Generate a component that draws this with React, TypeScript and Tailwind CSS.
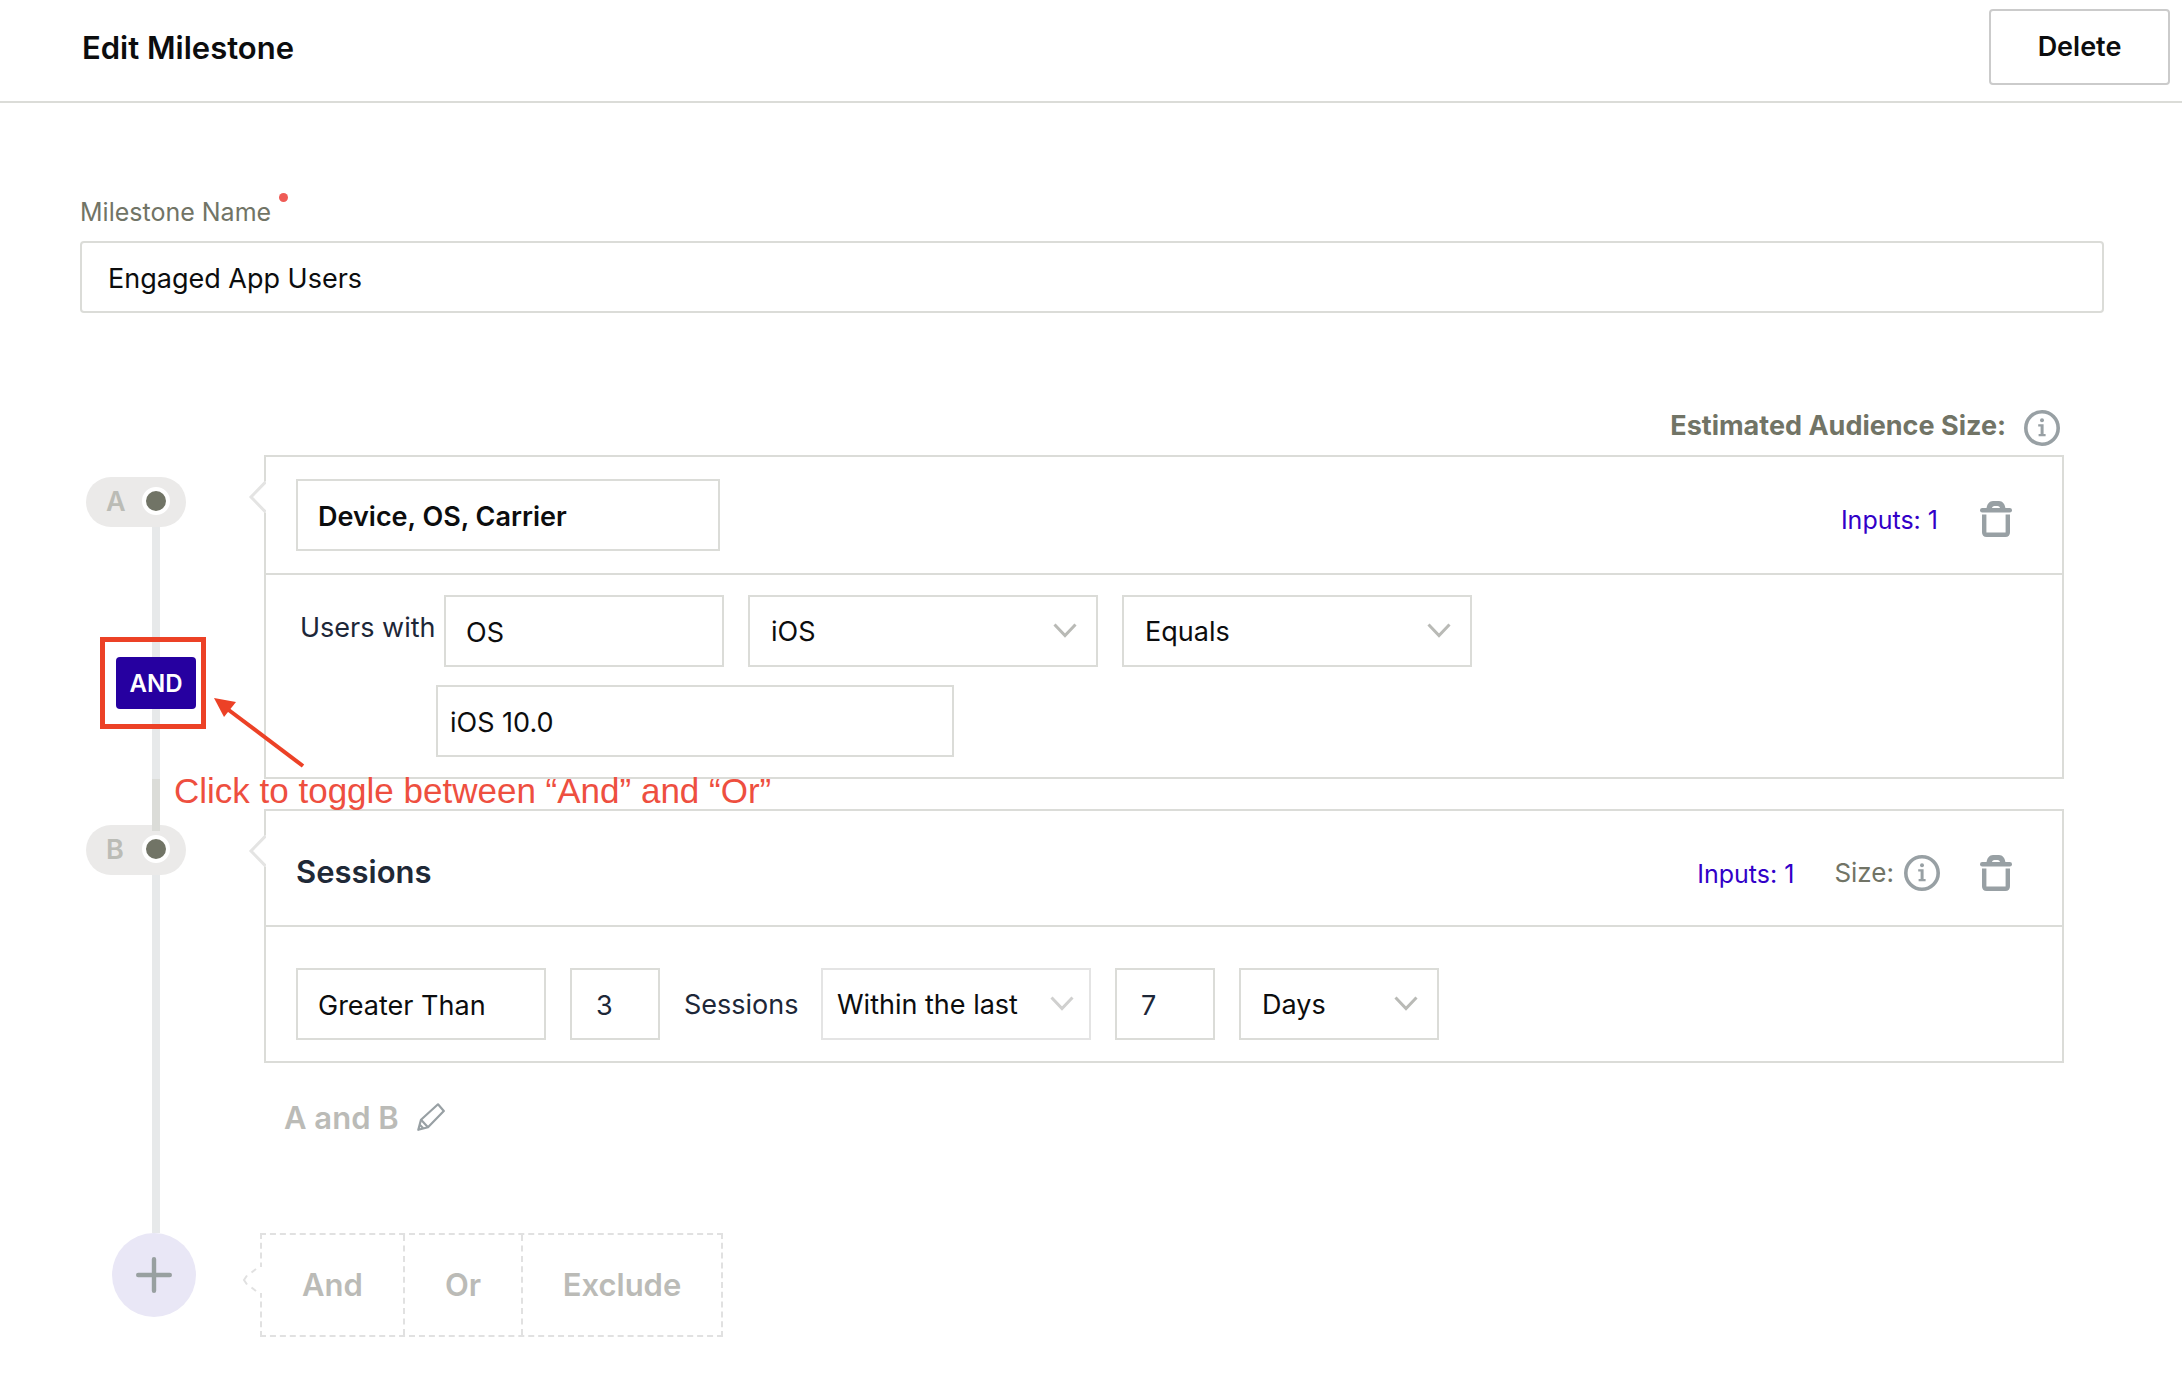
import clsx from 'clsx';
import { useState } from 'react';
import type { ReactNode } from 'react';

const fieldBase = 'h-[72px] border-2 bg-white pt-0.5 text-[27px] outline-none';

interface TextFieldProps {
  label: string;
  initial: string;
  className?: string;
}

function TextField({ label, initial, className }: TextFieldProps) {
  const [value, setValue] = useState(initial);

  return (
    <input
      type="text"
      aria-label={label}
      value={value}
      onChange={(event) => setValue(event.target.value)}
      className={clsx(fieldBase, 'border-[#dbdcd8]', className)}
    />
  );
}

interface SelectFieldProps {
  label: string;
  options: string[];
  className?: string;
  muted?: boolean;
}

function SelectField({ label, options, className, muted = false }: SelectFieldProps) {
  const [value, setValue] = useState(options[0]);

  return (
    <div className={clsx('relative shrink-0', className)}>
      <select
        aria-label={label}
        value={value}
        onChange={(event) => setValue(event.target.value)}
        className={clsx(
          fieldBase,
          'w-full appearance-none pr-14 text-[#0c0d0e]',
          muted ? 'border-[#e4e4e4] pl-3.5' : 'border-[#dbdcd8] pl-[21px]',
        )}
      >
        {options.map((option) => (
          <option key={option}>{option}</option>
        ))}
      </select>
      <svg
        className={clsx(
          'pointer-events-none absolute top-7 h-4 w-6',
          muted ? 'right-[17px] text-[#d0d0cf]' : 'right-[21px] text-[#b9bab6]',
        )}
        viewBox="0 0 24 16"
        fill="none"
        stroke="currentColor"
        strokeWidth="3"
      >
        <path d="M1.5 1.5 12 12.5 22.5 1.5" />
      </svg>
    </div>
  );
}

function InfoIcon() {
  return (
    <svg className="size-9 shrink-0 text-[#98a0a4]" viewBox="0 0 36 36" fill="none">
      <circle cx="18" cy="18" r="16.2" stroke="currentColor" strokeWidth="3.6" />
      <circle cx="18" cy="10.2" r="2" fill="currentColor" />
      <path d="M14.2 14.2h5.4v9.800h2v2.200h-7v-2.200h2v-7.600h-2.400z" fill="currentColor" />
    </svg>
  );
}

function TrashButton({ label }: { label: string }) {
  return (
    <button type="button" aria-label={label} className="shrink-0 text-[#98a0a4]">
      <svg className="h-9 w-8" viewBox="0 0 32 36" fill="none" stroke="currentColor">
        <path d="M2.200 9.300h27.600" strokeWidth="4.400" strokeLinecap="round" />
        <path
          d="M6.500 8C6.800 3 9.500 0 13 0h6c3.500 0 6.200 3 6.500 8h-5.200c-.3-2-1.300-3-2.800-3h-3c-1.500 0-2.500 1-2.800 3z"
          fill="currentColor"
          stroke="none"
        />
        <path d="M4.200 13.500V31.300q0 2.500 2.500 2.500h18.600q2.500 0 2.500-2.500V13.500" strokeWidth="4.400" />
      </svg>
    </button>
  );
}

function PencilIcon() {
  return (
    <svg
      className="size-7"
      viewBox="0 0 28 28"
      fill="none"
      stroke="#98a0a4"
      strokeWidth="2.2"
      strokeLinejoin="round"
    >
      <path d="M21 1.300 26.800 8 11 24.200 1.300 26.800 4 16.800z" />
      <path d="M4 16.800 11 24.200" />
      <path d="M2.800 21.800 6.200 25.300" />
    </svg>
  );
}

// Pill with the group letter and its node on the rail
function RailNode({ letter, joined = false }: { letter: string; joined?: boolean }) {
  return (
    <div className="relative ml-1.5 flex h-[50px] w-[100px] shrink-0 items-center justify-between self-start rounded-full bg-[#ebeae9] pr-4 pb-0.5 pl-5">
      {joined ? <span className="absolute top-0 left-[66px] h-1.5 w-2 bg-[#dbdcd8]" /> : null}
      <span className="pt-px text-[27px] leading-9 font-semibold text-[#bbbcb6]">{letter}</span>
      <span className="size-7 rounded-full border-4 border-white bg-[#717466]" />
    </div>
  );
}

function Rail({ children }: { children: ReactNode }) {
  return <div className="flex w-[152px] shrink-0 flex-col items-center">{children}</div>;
}

function Card({ header, children }: { header: ReactNode; children: ReactNode }) {
  return (
    <section className="relative ml-8 min-w-0 flex-1 border-2 border-[#dbdcd8] bg-white">
      <svg className="absolute top-6 -left-[18px] h-8 w-[18px]" viewBox="0 0 18 32" fill="none">
        <path d="M18 0 3 16 18 32z" fill="white" />
        <path d="M17.500 1 3 16 17.500 31" stroke="#e4e4e3" strokeWidth="3" />
      </svg>
      <div className="flex items-center border-b-2 border-[#dbdcd8] pr-[50px] pl-[30px]">{header}</div>
      {children}
    </section>
  );
}

// Red box, arrow and caption pointing at the operator toggle
function ToggleHint() {
  return (
    <>
      <span className="pointer-events-none absolute -top-5 -left-4 h-[92px] w-[106px] border-5 border-[#ec4126]" />
      <svg
        className="pointer-events-none absolute top-10 left-24 z-10 h-[72px] w-24"
        viewBox="0 0 96 72"
        fill="none"
      >
        <path d="M14 11 91 69" stroke="#ec4126" strokeWidth="4" />
        <path d="M2 1 24 5 12 20z" fill="#ec4126" />
      </svg>
      <span className="pointer-events-none absolute top-[114px] left-[58px] z-10 font-['Liberation_Sans',Arial,sans-serif] text-[35px] leading-10 whitespace-nowrap text-[#ee4f3f]">
        Click to toggle between “And” and “Or”
      </span>
    </>
  );
}

const addOptions = [
  { label: 'And', className: 'w-[143px] border-r-2' },
  { label: 'Or', className: 'w-[118px] border-r-2' },
  { label: 'Exclude', className: 'w-[198px]' },
];

export default function App() {
  const [operator, setOperator] = useState<'And' | 'Or'>('And');
  const [name, setName] = useState('Engaged App Users');

  return (
    <div className="min-h-screen bg-white font-['Inter',sans-serif] text-[#0c0d0e]">
      <header className="flex h-[103px] items-center justify-between border-b-2 border-[#dbdcd8] pr-3 pb-2 pl-[82px]">
        <h1 className="pt-0.5 text-[31px] leading-10 font-semibold">Edit Milestone</h1>
        <button
          type="button"
          className="h-[76px] w-[181px] rounded border-2 border-[#cbcbcb] pt-0.5 text-[27px] font-semibold"
        >
          Delete
        </button>
      </header>

      <main className="pt-[90px] pb-16 pl-20">
        <div className="pr-[78px]">
          <label htmlFor="milestone-name" className="mb-3 flex items-start gap-2 text-[25px] leading-9 text-[#717466]">
            <span className="pt-px">Milestone Name</span>
            <span className="size-[9px] rounded-full bg-[#ef5b56]" />
          </label>
          <input
            id="milestone-name"
            type="text"
            value={name}
            onChange={(event) => setName(event.target.value)}
            className="-mt-px h-[72px] w-full rounded border-2 border-[#dbdcd8] px-[26px] pt-0.5 text-[27px] outline-none"
          />
        </div>

        <div className="mt-[97px] pr-[118px]">
          <div className="mb-[9px] flex justify-end gap-[18px] pr-1">
            <span className="text-[27px] leading-8 font-bold text-[#717466]">Estimated Audience Size:</span>
            <InfoIcon />
          </div>

          <div className="flex">
            <Rail>
              <div className="h-[22px]" />
              <RailNode letter="A" />
              <div className="w-2 flex-1 bg-[#e7e9ea]" />
              <div className="relative">
                <button
                  type="button"
                  onClick={() => setOperator(operator === 'And' ? 'Or' : 'And')}
                  className="block h-[52px] w-20 rounded bg-[#2600a0] pt-0.5 text-2xl font-semibold text-white uppercase"
                >
                  {operator}
                </button>
                <ToggleHint />
              </div>
              <div className="h-[70px] w-2 bg-[#e7e9ea]" />
            </Rail>
            <Card
              header={
                <>
                  <TextField
                    label="Input type"
                    initial="Device, OS, Carrier"
                    className="my-[22px] w-[424px] px-5 font-semibold"
                  />
                  <span className="mt-2 ml-auto flex items-center gap-[42px]">
                    <a href="#inputs-a" className="pt-0.5 text-[25px] leading-9 text-[#3200c8]">
                      Inputs: 1
                    </a>
                    <TrashButton label="Delete group A" />
                  </span>
                </>
              }
            >
              <div className="px-[30px] pt-5 pb-5">
                <div className="flex items-center">
                  <span className="w-[148px] shrink-0 pb-1.5 pl-1 text-[27px] leading-9 whitespace-nowrap text-[#1d2738]">
                    Users with
                  </span>
                  <TextField label="Attribute" initial="OS" className="mr-6 w-[280px] px-5" />
                  <SelectField label="Platform" options={['iOS', 'Android']} className="mr-6 w-[350px]" />
                  <SelectField label="Comparison" options={['Equals', 'Does not equal']} className="w-[350px]" />
                </div>
                <TextField label="Version" initial="iOS 10.0" className="mt-[18px] ml-[140px] block w-[518px] px-3" />
              </div>
            </Card>
          </div>

          <div className="flex h-[30px]">
            <Rail>
              <div className="w-2 flex-1 bg-[#dbdcd8]" />
            </Rail>
          </div>

          <div className="flex">
            <Rail>
              <div className="h-4 w-2 bg-[#dbdcd8]" />
              <RailNode letter="B" joined />
              <div className="w-2 flex-1 bg-[#e7e9ea]" />
            </Rail>
            <Card
              header={
                <>
                  <h2 className="pt-[41px] pb-[33px] text-[31px] leading-10 font-semibold text-[#1f2937]">Sessions</h2>
                  <span className="mt-2.5 ml-auto flex items-center text-[25px] leading-9">
                    <a href="#inputs-b" className="mr-10 pt-0.5 text-[#3200c8]">
                      Inputs: 1
                    </a>
                    <span className="mr-2.5 text-[26px] text-[#717466]">Size:</span>
                    <InfoIcon />
                    <span className="w-10" />
                    <TrashButton label="Delete group B" />
                  </span>
                </>
              }
            >
              <div className="flex items-center gap-6 px-[30px] pt-[41px] pb-[21px]">
                <TextField label="Count comparison" initial="Greater Than" className="w-[250px] px-5" />
                <TextField label="Count" initial="3" className="w-[90px] px-6 text-[#1d2738]" />
                <span className="w-[113px] pt-0.5 text-[27px] leading-9 whitespace-nowrap text-[#1d2738]">
                  Sessions
                </span>
                <SelectField label="Time range" options={['Within the last', 'Before']} className="w-[270px]" muted />
                <TextField label="Amount" initial="7" className="w-[100px] px-6 text-[#1d2738]" />
                <SelectField label="Time unit" options={['Days', 'Weeks']} className="w-[200px]" />
              </div>
            </Card>
          </div>

          <div className="flex h-[170px]">
            <Rail>
              <div className="w-2 flex-1 bg-[#e7e9ea]" />
            </Rail>
            <div className="ml-[52px] flex items-start gap-[18px] pt-[35px]">
              <span className="text-[31px] leading-10 font-semibold text-[#bbbbb7]">A and B</span>
              <button type="button" aria-label="Edit expression" className="mt-[5px]">
                <PencilIcon />
              </button>
            </div>
          </div>

          <div className="flex">
            <Rail>
              <button
                type="button"
                aria-label="Add group"
                className="ml-8 flex size-[84px] items-center justify-center self-start rounded-full bg-[#e9e7f6]"
              >
                <svg className="size-9" viewBox="0 0 36 36" stroke="#98a0a0" strokeWidth="4.4" strokeLinecap="round">
                  <path d="M18 2.200v31.600M2.200 18h31.600" />
                </svg>
              </button>
            </Rail>
            <div className="relative ml-7 flex h-[104px] border-2 border-dashed border-[#e1e1e1]">
              <svg className="absolute top-8 -left-5 h-[26px] w-5" viewBox="0 0 20 26" fill="none">
                <path d="M16 0h4v26h-4z" fill="white" />
                <path d="M5 8.500 2 13 5 17.500M9.500 5.500 14 2M9.500 20.500 14 24" stroke="#e1e1e1" strokeWidth="2" />
              </svg>
              {addOptions.map((option) => (
                <button
                  key={option.label}
                  type="button"
                  className={clsx(
                    'border-dashed border-[#e1e1e1] text-[31px] font-semibold text-[#bbbbb7]',
                    option.className,
                  )}
                >
                  {option.label}
                </button>
              ))}
            </div>
          </div>
        </div>
      </main>
    </div>
  );
}
